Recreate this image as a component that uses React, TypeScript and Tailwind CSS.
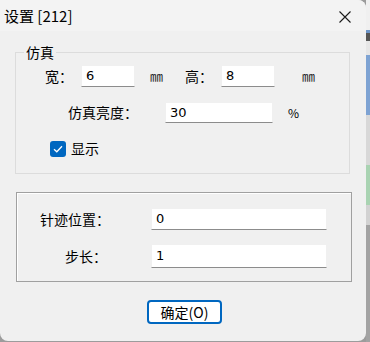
import React from "react";

const cjk = { fontFamily: '"Noto Sans CJK SC", "Noto Sans", sans-serif' };
const num = { fontFamily: '"DejaVu Sans", "Liberation Sans", sans-serif' };

const Field = ({ value, w, h }: { value: string; w: string; h: string }) => (
  <div className={`${w} ${h} bg-white border border-[#f0f0f0] border-b-[#8c8c8c] flex items-center pl-[4px] text-[13px] text-black`} style={num}>
    {value}
  </div>
);

const App = () => {
  return (
    <div className="w-[370px] h-[342px] flex bg-[#9c9c9c] overflow-hidden" style={cjk}>
      {/* dialog */}
      <div className="w-[366px] h-[341px] bg-[#f0f0f0] rounded-tr-[8px] rounded-br-[8px] rounded-bl-[8px] flex flex-col">
        {/* title bar */}
        <div className="h-[31px] bg-[#f3f3f3] rounded-tr-[8px] flex items-center justify-between pl-[4px] pr-[14px] shrink-0">
          <span className="text-[15px] text-black leading-none">设置 [212]</span>
          <svg width="14" height="14" viewBox="0 0 14 14" className="mt-[2px]">
            <path d="M1.5 1.5 L12.5 12.5 M12.5 1.5 L1.5 12.5" stroke="#1a1a1a" strokeWidth="1.1" fill="none" />
          </svg>
        </div>

        {/* group 1 */}
        <div className="relative mt-[21px] ml-[15px] w-[335px] h-[122px] border border-[#dcdcdc] shrink-0">
          <span className="absolute left-[8px] top-[-11px] px-[2px] bg-[#f0f0f0] text-[14px] leading-[20px] text-black">仿真</span>
          <div className="flex items-center mt-[12px] ml-[29px] h-[22px] text-[14px] text-black">
            <span className="w-[36px]">宽：</span>
            <Field value="6" w="w-[54px]" h="h-[22px]" />
            <span className="w-[35px] ml-[15px] text-[13px] text-[#222222]">㎜</span>
            <span className="w-[36px]">高：</span>
            <Field value="8" w="w-[54px]" h="h-[22px]" />
            <span className="ml-[27px] text-[13px] text-[#222222]">㎜</span>
          </div>
          <div className="flex items-center mt-[15px] ml-[52px] h-[21px] text-[14px] text-black">
            <span className="w-[97px]">仿真亮度：</span>
            <Field value="30" w="w-[108px]" h="h-[21px]" />
            <span className="ml-[15px] text-[12px]">%</span>
          </div>
          <div className="flex items-center mt-[15px] ml-[34px] gap-[5px] text-[14px] text-black">
            <div className="w-[16px] h-[16px] rounded-[3px] bg-[#0067c0] flex items-center justify-center">
              <svg width="10" height="8" viewBox="0 0 10 8">
                <path d="M1 4.2 L3.8 6.8 L9 1.2" stroke="#ffffff" strokeWidth="1.3" fill="none" />
              </svg>
            </div>
            <span>显示</span>
          </div>
        </div>

        {/* group 2 */}
        <div className="mt-[18px] ml-[16px] w-[336px] h-[90px] border border-[#a0a0a0] shadow-[inset_1px_1px_0_#ffffff] shrink-0 flex flex-col">
          <div className="flex items-center mt-[15px] ml-[23px] text-[14px] text-black">
            <span className="w-[111px]">针迹位置：</span>
            <Field value="0" w="w-[176px]" h="h-[22px]" />
          </div>
          <div className="flex items-center mt-[14px] ml-[48px] text-[14px] text-black">
            <span className="w-[86px]">步长：</span>
            <Field value="1" w="w-[176px]" h="h-[24px]" />
          </div>
        </div>

        {/* button */}
        <div className="mt-[18px] ml-[147px] w-[75px] h-[24px] rounded-[4px] border-[2px] border-[#0067c0] bg-white flex items-center justify-center text-[14px] text-black">
          确定(O)
        </div>
      </div>

      {/* background strip */}
      <div className="w-[4px] h-[342px] flex flex-col">
        <div className="h-[30px] bg-[#f0f0f0]" />
        <div className="h-[3px] bg-[#6d95c8]" />
        <div className="h-[8px] bg-[#555555]" />
        <div className="h-[14px] bg-[#e6e6e6]" />
        <div className="h-[60px] bg-[#7ea3d3]" />
        <div className="h-[50px] bg-[#d8d8d8]" />
        <div className="h-[40px] bg-[#a9d3b2]" />
        <div className="h-[20px] bg-[#d2d2d2]" />
        <div className="flex-1 bg-[#a3a3a3]" />
      </div>
    </div>
  );
};

export default App;
